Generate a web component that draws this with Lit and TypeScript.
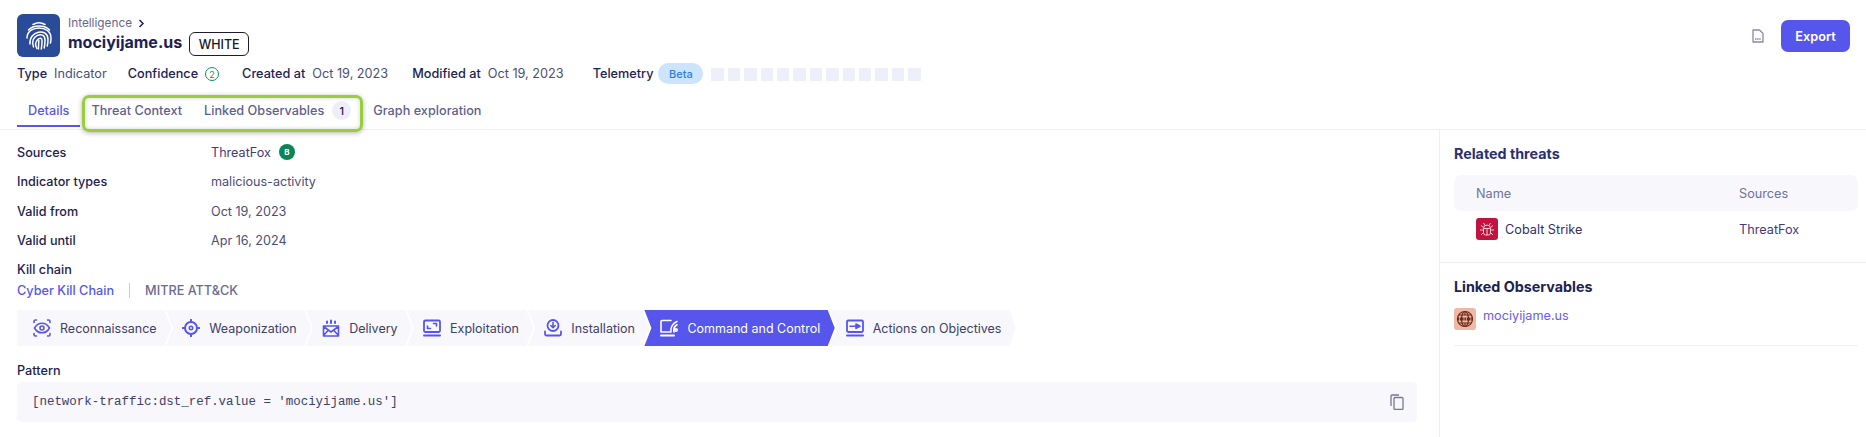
import {LitElement, html, css, svg} from 'lit';
import {customElement} from 'lit/decorators.js';

const stroke = (body: unknown, size = 18) => html`<svg
  width=${size}
  height=${size}
  viewBox="0 0 18 18"
  fill="none"
  stroke="currentColor"
  stroke-width="1.6"
  stroke-linecap="round"
  stroke-linejoin="round"
>${body}</svg>`;

const chainIcons: Record<string, unknown> = {
  eye: svg`<path d="M1 3.500V2.500A1.500 1.500 0 0 1 2.500 1H3.500M14.500 1h1A1.500 1.500 0 0 1 17 2.500V3.500M1 14.500v1A1.500 1.500 0 0 0 2.500 17H3.500M14.500 17h1a1.500 1.500 0 0 0 1.500-1.500V14.500"/><path d="M1.500 9C3.500 5.500 6 4.200 9 4.200S14.500 5.500 16.500 9C14.500 12.500 12 13.800 9 13.800S3.500 12.500 1.500 9Z"/><circle cx="9" cy="9" r="2"/>`,
  target: svg`<circle cx="9" cy="9" r="6" stroke-width="2"/><circle cx="9" cy="9" r="1.700"/><path d="M9 .8v2M9 15.200v2M.8 9h2M15.200 9h2" stroke-width="2"/>`,
  mail: svg`<path d="M1.500 7h15v10h-15zM1.500 7.500 9 13l7.500-5.500M1.500 16.500 6.500 11M16.500 16.500 11.500 11"/><path d="M5 2.500v1.500M9 1.500V4M13 2.500v1.500" stroke-width="2"/>`,
  screen: svg`<rect x="1" y="1.500" width="16" height="11.500" rx="1.200" stroke-width="1.800"/><path d="M1 16.500h16" stroke-width="2"/><path d="M4.500 7v2.500h3M13.500 7V4.500h-3"/>`,
  install: svg`<circle cx="9" cy="6.500" r="5.500" stroke-width="1.800"/><path d="M9 3.500v5M6.800 6.500 9 8.700l2.200-2.200"/><path d="M1 12.500v2.500a1.500 1.500 0 0 0 1.500 1.500h13a1.500 1.500 0 0 0 1.500-1.500v-2.500" stroke-width="1.800"/>`,
  c2: svg`<path d="M11 1.500H2A1 1 0 0 0 1 2.500V13h9"/><path d="M1 16.500h13" stroke-width="2"/><path d="M17 2.500a10 10 0 0 0-6 10.500M17 5.800a6.500 6.500 0 0 0-3 7.200"/><circle cx="16" cy="11" r="1.200"/>`,
  actions: svg`<rect x="1" y="1.500" width="16" height="11.500" rx="1.200" stroke-width="1.800"/><path d="M1 16.500h16" stroke-width="2"/><path d="M4 7.200h7" /><path d="M10 5l4 2.200-4 2.200z" fill="currentColor"/>`,
};

const chain = [
  {label: 'Reconnaissance', icon: 'eye'},
  {label: 'Weaponization', icon: 'target'},
  {label: 'Delivery', icon: 'mail'},
  {label: 'Exploitation', icon: 'screen'},
  {label: 'Installation', icon: 'install'},
  {label: 'Command and Control', icon: 'c2', active: true},
  {label: 'Actions on Objectives', icon: 'actions'},
];

@customElement('app-root')
export class AppRoot extends LitElement {
  static styles = css`
    :host {
      display: block;
      width: 100%;
      height: 437px;
      overflow: hidden;
      background: #fff;
      color: #1c2250;
      font-family: Inter, 'Liberation Sans', sans-serif;
      font-size: 12.700px;
    }
    * {
      box-sizing: border-box;
    }
    header {
      height: 130px;
      padding: 14px 16px 0 17px;
      border-bottom: 1px solid #eeeef6;
    }
    .top {
      display: flex;
      justify-content: space-between;
      height: 43px;
    }
    .identity {
      display: flex;
      gap: 8px;
    }
    .logo {
      width: 43px;
      height: 43px;
      border-radius: 6px;
      background: #2a4b97;
      color: #fff;
      display: flex;
      align-items: center;
      justify-content: center;
    }
    .crumb {
      display: flex;
      align-items: center;
      gap: 6px;
      height: 18px;
      font-size: 11.800px;
      color: #66668f;
    }
    .title-row {
      display: flex;
      align-items: flex-start;
      gap: 7px;
      height: 25px;
    }
    h1 {
      margin: 0;
      font-size: 16px;
      line-height: 20px;
      font-weight: 700;
      color: #1c2250;
    }
    .tlp {
      height: 24px;
      width: 60px;
      margin-top: 0;
      border: 1px solid #1c1c30;
      border-radius: 6px;
      font-size: 12.500px;
      font-weight: 500;
      color: #15162c;
      display: flex;
      align-items: center;
      justify-content: center;
    }
    .actions {
      display: flex;
      align-items: flex-start;
      gap: 17px;
      padding-top: 6px;
    }
    .doc {
      margin-top: 9px;
      color: #8a8aa8;
    }
    .export {
      width: 69px;
      height: 32px;
      border: none;
      border-radius: 7px;
      background: #5656ec;
      color: #fff;
      font: 600 12.700px Inter, sans-serif;
    }
    .meta {
      display: flex;
      align-items: center;
      height: 24px;
      margin-top: 4px;
    }
    .meta b {
      font-weight: 500;
      color: #1c2250;
      margin-right: 7px;
    }
    .meta span.value {
      color: #4a4e75;
    }
    .meta .item {
      display: flex;
      align-items: center;
      margin-right: 21px;
    }
    .meta .item.conf-item {
      margin-right: 23px;
    }
    .meta .item.created {
      margin-right: 24px;
    }
    .meta .item.wide {
      margin-right: 29px;
    }
    .conf {
      width: 14px;
      height: 14px;
      border: 1px solid #0f8f5f;
      border-radius: 50%;
      color: #0f8f5f;
      font-size: 9px;
      display: flex;
      align-items: center;
      justify-content: center;
      margin-top: 2px;
    }
    .beta {
      width: 45px;
      height: 21px;
      border-radius: 11px;
      background: #cde4fd;
      color: #2a80ea;
      font-size: 11px;
      font-weight: 500;
      display: flex;
      align-items: center;
      justify-content: center;
      margin-left: -2px;
      margin-right: 8px;
      margin-top: 1px;
    }
    .squares {
      display: flex;
      gap: 4px;
      margin-top: 3px;
    }
    .squares i {
      width: 12.400px;
      height: 13px;
      background: #eeeffa;
    }
    .tabs {
      position: relative;
      display: flex;
      height: 37px;
      margin-top: 5px;
      color: #5e5f8e;
      font-weight: 500;
    }
    .tab {
      display: flex;
      align-items: center;
      gap: 8px;
      padding: 6px 11px 0;
      height: 37px;
      border-bottom: 2px solid transparent;
    }
    .tab.on {
      color: #5656ec;
      border-bottom-color: #5656ec;
    }
    .count {
      width: 19px;
      height: 19px;
      border-radius: 50%;
      background: #eeeef8;
      color: #1c2250;
      font-size: 11px;
      display: flex;
      align-items: center;
      justify-content: center;
    }
    .highlight {
      position: absolute;
      left: 65px;
      top: 5px;
      width: 281px;
      height: 37px;
      border: 3px solid #9acd3c;
      border-radius: 7px;
      box-shadow: 0 1px 5px rgba(0, 0, 0, 0.3), inset 0 0 4px rgba(0, 0, 0, 0.18);
    }
    main {
      display: flex;
      height: 307px;
    }
    .left {
      width: 1440px;
      padding: 7.500px 22px 0 17px;
      border-right: 1px solid #eeeef8;
    }
    .row {
      display: grid;
      grid-template-columns: 194px 1fr;
      align-items: center;
      height: 29.500px;
      font-size: 12.600px;
      color: #4a4e75;
    }
    .row b,
    .label {
      font-weight: 500;
      color: #1c2250;
    }
    .source {
      display: flex;
      align-items: center;
      gap: 8px;
    }
    .purple {
      color: #453a7a;
    }
    .grade {
      width: 16px;
      height: 16px;
      border-radius: 50%;
      background: #0b8457;
      color: #fff;
      font-size: 8px;
      font-weight: 700;
      display: flex;
      align-items: center;
      justify-content: center;
    }
    .label {
      height: 18px;
      line-height: 18px;
    }
    .kc {
      margin-top: 5.500px;
    }
    .kc-tabs {
      display: flex;
      align-items: center;
      height: 18px;
      margin-top: 2px;
      font-weight: 500;
      color: #6a6b92;
    }
    .kc-tabs .sel {
      color: #5656ec;
    }
    .sep {
      width: 1px;
      height: 15px;
      background: #c9c9dc;
      margin: 0 15px;
    }
    .chain {
      display: flex;
      margin-top: 11px;
    }
    .seg {
      display: flex;
      align-items: center;
      gap: 9px;
      height: 36px;
      padding: 0 14.500px 0 16px;
      margin-left: -5px;
      font-size: 12.500px;
      background: #f7f7fc;
      color: #3e4068;
      clip-path: polygon(0 0, calc(100% - 7px) 0, 100% 50%, calc(100% - 7px) 100%, 0 100%, 7px 50%);
    }
    .seg:first-child {
      margin-left: 0;
      clip-path: polygon(0 0, calc(100% - 7px) 0, 100% 50%, calc(100% - 7px) 100%, 0 100%);
    }
    .seg svg {
      color: #5656ec;
    }
    .seg.active {
      background: #5656ec;
      color: #fff;
    }
    .seg.active svg {
      color: #fff;
    }
    .pattern-label {
      margin-top: 16px;
    }
    .code {
      display: flex;
      align-items: center;
      justify-content: space-between;
      height: 40px;
      margin-top: 2px;
      padding: 0 13px 0 15px;
      border-radius: 5px;
      background: #f7f7fc;
      font-family: 'Liberation Mono', monospace;
      font-size: 12.450px;
      color: #3e4068;
    }
    .code svg {
      color: #77789a;
    }
    .right {
      flex: 1;
    }
    .related {
      height: 133px;
      padding: 15px 8px 0 14px;
      border-bottom: 1px solid #eeeef8;
    }
    h2 {
      margin: 0;
      height: 18px;
      line-height: 18px;
      font-size: 14.300px;
      font-weight: 700;
      color: #1c2250;
    }
    .related h2 {
      color: #2a2f70;
    }
    .thead,
    .trow {
      display: grid;
      grid-template-columns: 263px 1fr;
      align-items: center;
      padding-left: 22px;
    }
    .thead {
      height: 36px;
      margin-top: 12px;
      border-radius: 7px;
      background: #f7f7fc;
      color: #70729c;
    }
    .trow {
      height: 22px;
      margin-top: 7px;
      color: #2f3265;
    }
    .name {
      display: flex;
      align-items: center;
      gap: 7px;
    }
    .badge {
      width: 22px;
      height: 22px;
      border-radius: 3px;
      display: flex;
      align-items: center;
      justify-content: center;
      flex: none;
    }
    .bug {
      background: #c2123f;
      color: #f5c8d2;
    }
    .globe {
      background: #eeb9a5;
      color: #6b2a17;
    }
    .linked {
      margin: 0 8px 0 14px;
      padding-top: 15px;
      height: 83px;
      border-bottom: 1px solid #eeeef8;
    }
    .obs {
      display: flex;
      gap: 7px;
      margin-top: 12px;
      color: #6a5cf0;
    }
    .obs span {
      line-height: 16px;
    }
  `;

  render() {
    return html`
      <header>
        <div class="top">
          <div class="identity">
            <div class="logo">
              <svg width="28" height="30" viewBox="0 0 28 30" fill="none" stroke="currentColor" stroke-width="1.500" stroke-linecap="round">
                <path d="M8 3.500C11.500 1.500 16.500 1.500 20 3.500" />
                <path d="M3.500 9C8 3.500 20 3.500 24.500 9" />
                <path d="M2 17C2 3.500 26 3.500 26 17C26 19 25.800 20.500 25.400 22" />
                <path d="M5 23C3.500 9.500 23 6.500 23 18.500C23 21 22.800 23 22.200 25" />
                <path d="M8.500 26C3.500 15 20 8.500 20 19C20 22 19.800 24 19.200 27" />
                <path d="M12 27.500C7.500 20 17 13.500 17 19.500C17 22.500 16.800 25 16.300 28" />
                <path d="M13.800 19.500C13.800 22.500 13.300 25 13.500 28" />
              </svg>
            </div>
            <div>
              <div class="crumb">
                Intelligence
                <svg width="7" height="9" viewBox="0 0 7 9" fill="none" stroke="#1c2250" stroke-width="1.500"><path d="M1.500 1l3.500 3.500L1.500 8" /></svg>
              </div>
              <div class="title-row">
                <h1>mociyijame.us</h1>
                <div class="tlp">WHITE</div>
              </div>
            </div>
          </div>
          <div class="actions">
            <svg class="doc" width="12" height="14" viewBox="0 0 12 14" fill="none" stroke="currentColor" stroke-width="1.300">
              <path d="M1 1h6.500L11 4.500V13H1z" stroke-linejoin="round" />
              <path d="M3 10h6" stroke-dasharray="1.500 .6" />
            </svg>
            <button class="export">Export</button>
          </div>
        </div>
        <div class="meta">
          <div class="item"><b>Type</b><span class="value">Indicator</span></div>
          <div class="item conf-item"><b>Confidence</b><span class="conf">2</span></div>
          <div class="item created"><b>Created at</b><span class="value">Oct 19, 2023</span></div>
          <div class="item wide"><b>Modified at</b><span class="value">Oct 19, 2023</span></div>
          <b>Telemetry</b>
          <span class="beta">Beta</span>
          <div class="squares">${Array.from({length: 13}, () => html`<i></i>`)}</div>
        </div>
        <nav class="tabs">
          <div class="tab on">Details</div>
          <div class="tab">Threat Context</div>
          <div class="tab">Linked Observables <span class="count">1</span></div>
          <div class="tab">Graph exploration</div>
          <div class="highlight"></div>
        </nav>
      </header>
      <main>
        <section class="left">
          <div class="row">
            <b>Sources</b>
            <div class="source"><span class="purple">ThreatFox</span><span class="grade">B</span></div>
          </div>
          <div class="row"><b>Indicator types</b><span>malicious-activity</span></div>
          <div class="row"><b>Valid from</b><span>Oct 19, 2023</span></div>
          <div class="row"><b>Valid until</b><span>Apr 16, 2024</span></div>
          <div class="label kc">Kill chain</div>
          <div class="kc-tabs"><span class="sel">Cyber Kill Chain</span><span class="sep"></span><span>MITRE ATT&amp;CK</span></div>
          <div class="chain">
            ${chain.map(
              (s) => html`<div class="seg ${s.active ? 'active' : ''}">${stroke(chainIcons[s.icon])}<span>${s.label}</span></div>`
            )}
          </div>
          <div class="label pattern-label">Pattern</div>
          <div class="code">
            <span>[network-traffic:dst_ref.value = 'mociyijame.us']</span>
            <svg width="14" height="16" viewBox="0 0 14 16" fill="none" stroke="currentColor" stroke-width="1.300">
              <rect x="4" y="3.500" width="9" height="12" rx="1" />
              <path d="M1 12V2a1 1 0 0 1 1-1h7" />
            </svg>
          </div>
        </section>
        <aside class="right">
          <div class="related">
            <h2>Related threats</h2>
            <div class="thead"><span>Name</span><span>Sources</span></div>
            <div class="trow">
              <div class="name">
                <span class="badge bug">
                  <svg width="18" height="18" viewBox="0 0 18 18" fill="none" stroke="currentColor" stroke-width="1">
                    <path d="M5.500 8.500a3.500 3.500 0 0 1 7 0V13a2 2 0 0 1-2 2h-3a2 2 0 0 1-2-2zM5.500 8.500h7M9 9v6" />
                    <path d="M7 5.500 5.500 3M11 5.500 12.500 3M5.500 10H2M12.500 10H16M5.500 7.500 3 5.500M12.500 7.500 15 5.500M5.500 12.500 3 15M12.500 12.500 15 15" />
                  </svg>
                </span>
                Cobalt Strike
              </div>
              <span class="purple">ThreatFox</span>
            </div>
          </div>
          <div class="linked">
            <h2>Linked Observables</h2>
            <div class="obs">
              <span class="badge globe">
                <svg width="18" height="18" viewBox="0 0 18 18" fill="none" stroke="currentColor" stroke-width="1.200">
                  <circle cx="9" cy="9" r="7.500" />
                  <ellipse cx="9" cy="9" rx="3.500" ry="7.500" />
                  <path d="M9 1.500v3M9 13.500v3M2.500 5h13M2.500 13h13" />
                  <path d="M1.500 9h15" stroke-width="3" stroke-dasharray="1.500 .8" />
                </svg>
              </span>
              <span>mociyijame.us</span>
            </div>
          </div>
        </aside>
      </main>
    `;
  }
}
